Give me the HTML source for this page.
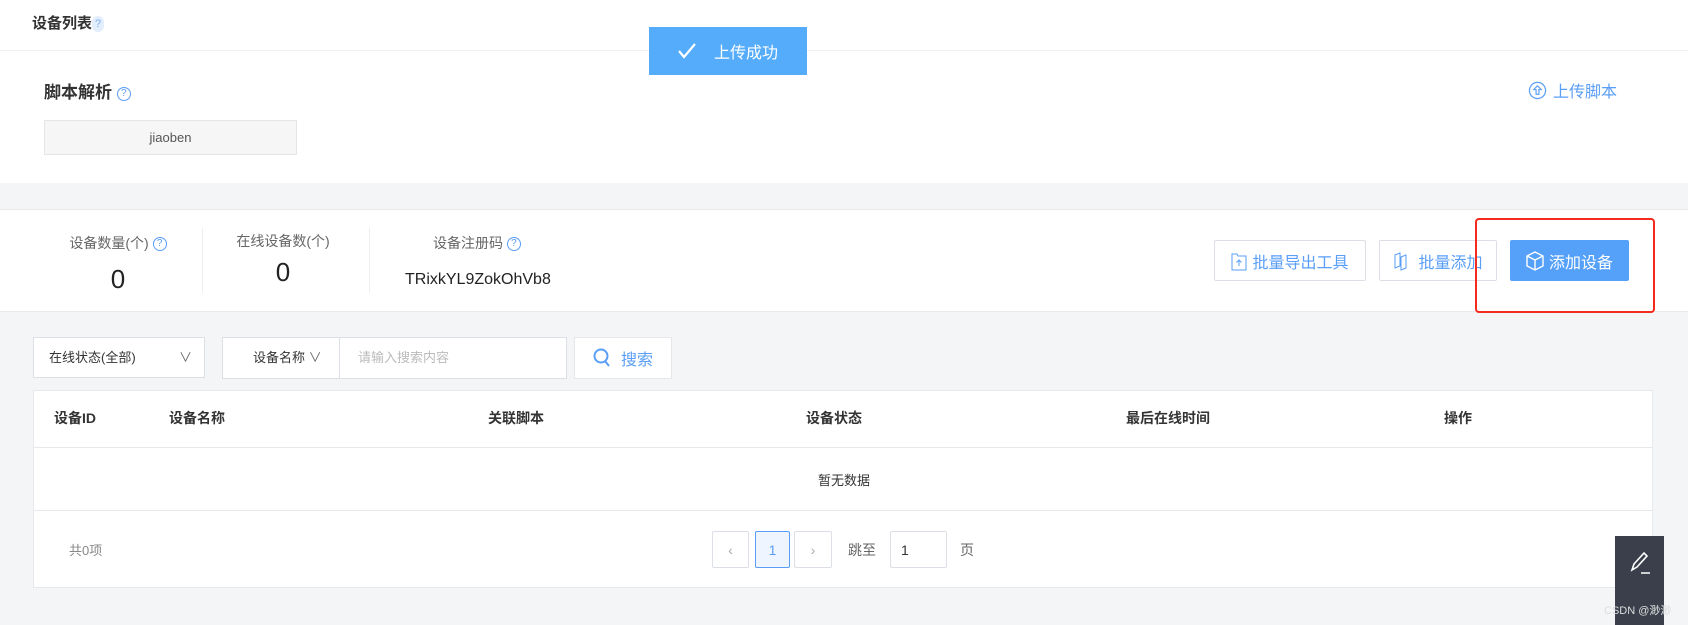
<!DOCTYPE html>
<html><head><meta charset="utf-8"><style>
*{box-sizing:border-box;margin:0;padding:0}
body{width:1688px;height:625px;overflow:hidden;background:#f4f5f7;font-family:"Liberation Sans","Noto Sans CJK SC",sans-serif;color:#333;position:relative}
.a{position:absolute}
.q{display:inline-block;width:14px;height:14px;border:1px solid #5a9ef7;border-radius:50%;color:#5a9ef7;font-size:10px;text-align:center;line-height:12px;font-weight:normal;vertical-align:middle}
.btn{position:absolute;border:1px solid #dcdfe6;background:#fff;color:#5a9ef7;font-size:16px;display:flex;align-items:center;justify-content:center;gap:5px;border-radius:2px}
.th{position:absolute;top:408px;font-size:14px;font-weight:bold;color:#333}
.pg{position:absolute;top:531px;height:37px;border:1px solid #dcdfe6;background:#fff;border-radius:2px;display:flex;align-items:center;justify-content:center;color:#aaa;font-size:14px}
</style></head><body>
<div class="a" style="left:0;top:0;width:1688px;height:183px;background:#fff"></div>
<div class="a" style="left:0;top:50px;width:1688px;height:1px;background:#eef0f2"></div>
<div class="a" style="left:32px;top:12px;font-size:15px;font-weight:bold">设备列表<span style="display:inline-block;width:12px;height:16px;background:#e3eefc;color:#7fb0f0;font-size:11px;text-align:center;line-height:16px;border-radius:6px;font-weight:normal;vertical-align:middle">?</span></div>
<div class="a" style="left:649px;top:27px;width:158px;height:48px;background:#55acfa;color:#fff;font-size:16px;display:flex;align-items:center;padding-left:28px">
<svg width="20" height="18" viewBox="0 0 20 18"><path d="M2 9l5 6L18 2" stroke="#fff" stroke-width="2.2" fill="none"/></svg><span style="margin-left:17px">上传成功</span></div>
<div class="a" style="left:44px;top:78px;font-size:17px;font-weight:bold">脚本解析 <span class="q">?</span></div>
<div class="a" style="left:44px;top:120px;width:253px;height:35px;background:#f6f6f6;border:1px solid #e5e5e5;font-size:13px;text-align:center;line-height:33px;color:#555">jiaoben</div>
<div class="a" style="left:1528px;top:78px;color:#5a9ef7;font-size:16px;display:flex;align-items:center;gap:6px">
<svg width="19" height="19" viewBox="0 0 20 20"><circle cx="10" cy="10" r="8.5" stroke="#5a9ef7" stroke-width="1.3" fill="none"/><path d="M10 5l-4 4h2.5v5h3V9H14z" stroke="#5a9ef7" stroke-width="1.2" fill="none"/></svg>上传脚本</div>
<div class="a" style="left:0;top:209px;width:1688px;height:103px;background:#fff;border-top:1px solid #e8eaec;border-bottom:1px solid #e8eaec"></div>
<div class="a" style="left:68px;top:233px;width:100px;text-align:center;font-size:14px;color:#666">设备数量(个) <span class="q">?</span></div>
<div class="a" style="left:68px;top:264px;width:100px;text-align:center;font-size:26px;color:#222">0</div>
<div class="a" style="left:202px;top:228px;width:1px;height:65px;background:#eee"></div>
<div class="a" style="left:230px;top:231px;width:106px;text-align:center;font-size:14px;color:#666">在线设备数(个)</div>
<div class="a" style="left:230px;top:257px;width:106px;text-align:center;font-size:26px;color:#222">0</div>
<div class="a" style="left:369px;top:228px;width:1px;height:65px;background:#eee"></div>
<div class="a" style="left:433px;top:233px;font-size:14px;color:#666">设备注册码 <span class="q">?</span></div>
<div class="a" style="left:405px;top:271px;font-size:16px;color:#222">TRixkYL9ZokOhVb8</div>
<div class="btn" style="left:1214px;top:240px;width:152px;height:41px"><svg width="16" height="20" viewBox="0 0 16 20"><path d="M1 3h5l1 2h8v14H1z" stroke="#5a9ef7" fill="none"/><path d="M8 15V9M5.5 11.5L8 9l2.5 2.5" stroke="#5a9ef7" fill="none"/></svg>批量导出工具</div>
<div class="btn" style="left:1379px;top:240px;width:118px;height:41px"><svg width="20" height="20" viewBox="0 0 20 20"><path d="M2 4l5-2v13l-5 2zM8 6l5-2v13l-5 2z" stroke="#5a9ef7" fill="none"/></svg>批量添加</div>
<div class="a" style="left:1510px;top:240px;width:119px;height:41px;background:#55a0f9;color:#fff;font-size:16px;display:flex;align-items:center;justify-content:center;gap:5px;border-radius:2px"><svg width="18" height="20" viewBox="0 0 18 20"><path d="M9 1l8 4v10l-8 4-8-4V5zM1 5l8 4 8-4M9 9v10" stroke="#fff" stroke-width="1.4" fill="none"/></svg>添加设备</div>
<div class="a" style="left:1475px;top:218px;width:180px;height:95px;border:2.5px solid #f42a1e;border-radius:4px"></div>
<div class="a" style="left:33px;top:337px;width:172px;height:41px;background:#fff;border:1px solid #dcdfe6;font-size:13px;padding-left:15px;line-height:39px">在线状态(全部)<span style="position:absolute;right:12px;color:#666">∨</span></div>
<div class="a" style="left:222px;top:337px;width:345px;height:42px;background:#fff;border:1px solid #dcdfe6;font-size:13px;line-height:40px"><span style="position:absolute;left:30px">设备名称 <span style="color:#666">∨</span></span><div style="position:absolute;left:116px;top:0;width:1px;height:40px;background:#dcdfe6"></div><span style="position:absolute;left:135px;color:#bbb">请输入搜索内容</span></div>
<div class="a" style="left:574px;top:337px;width:98px;height:42px;background:#fff;border:1px solid #e5e7ea;color:#5a9ef7;font-size:16px;display:flex;align-items:center;justify-content:center;gap:10px"><svg width="18" height="20" viewBox="0 0 18 20"><circle cx="8" cy="8" r="6.5" stroke="#5a9ef7" stroke-width="2" fill="none"/><path d="M12 13l4 5" stroke="#5a9ef7" stroke-width="2"/></svg>搜索</div>
<div class="a" style="left:33px;top:390px;width:1620px;height:198px;background:#fff;border:1px solid #e6e8eb"></div>
<div class="a" style="left:33px;top:447px;width:1620px;height:1px;background:#e6e8eb"></div>
<div class="a" style="left:33px;top:510px;width:1620px;height:1px;background:#e6e8eb"></div>
<div class="th" style="left:54px">设备ID</div><div class="th" style="left:169px">设备名称</div><div class="th" style="left:488px">关联脚本</div><div class="th" style="left:806px">设备状态</div><div class="th" style="left:1126px">最后在线时间</div><div class="th" style="left:1444px">操作</div>
<div class="a" style="left:784px;top:470px;width:120px;text-align:center;font-size:13px">暂无数据</div>
<div class="a" style="left:69px;top:540px;font-size:13px;color:#888">共0项</div>
<div class="pg" style="left:712px;width:37px">‹</div>
<div class="pg" style="left:755px;width:35px;border-color:#5a9ef7;background:#eef5ff;color:#5a9ef7">1</div>
<div class="pg" style="left:794px;width:38px">›</div>
<div class="a" style="left:848px;top:540px;font-size:14px;color:#666">跳至</div>
<div class="pg" style="left:890px;width:57px;justify-content:flex-start;padding-left:10px;color:#333">1</div>
<div class="a" style="left:960px;top:540px;font-size:14px;color:#666">页</div>
<div class="a" style="left:1615px;top:536px;width:49px;height:89px;background:#3a3f4b"></div>
<svg class="a" style="left:1628px;top:550px" width="24" height="26" viewBox="0 0 24 26"><path d="M4 20l2-6L16 3l3 3L9 17zM13 23h9" stroke="#fff" stroke-width="1.6" fill="none"/></svg>
<div class="a" style="left:1604px;top:602px;font-size:11px;color:#ddd">CSDN @渺渺</div>
</body></html>
